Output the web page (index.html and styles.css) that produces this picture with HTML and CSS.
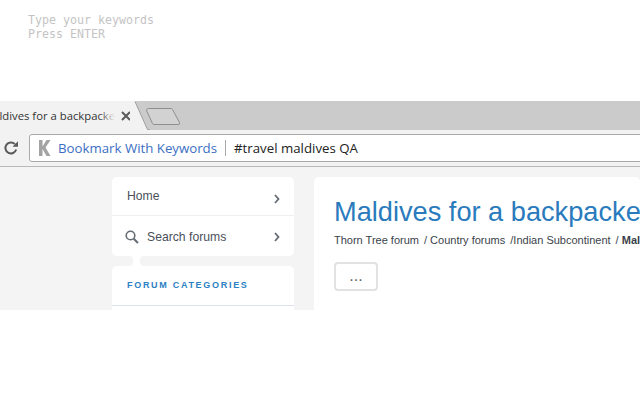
FILE: index.html
```html
<!DOCTYPE html>
<html lang="en">
  <head>
    <meta charset="UTF-8" />
    <title>Bookmark With Keywords</title>
    <link rel="stylesheet" href="styles.css">
  </head>
  <body>
    <div class="hint">
      <div>Type your keywords</div>
      <div>Press ENTER</div>
    </div>

    <div class="browser">
      <div class="tabstrip">
        <div class="tab">
          <span class="tab-title">Maldives for a backpacker</span>
          <svg class="tab-close" width="10" height="10" viewBox="0 0 10 10">
            <path d="M1 1L9 9M9 1L1 9" stroke="#5a5a5a" stroke-width="2" fill="none" />
          </svg>
        </div>
        <svg class="tab-edge" width="20" height="29" viewBox="0 0 20 29">
          <path d="M0 0H5L18 29H0Z" fill="#f2f2f2" />
          <path d="M5 0.500L17.500 28.500" stroke="#9a9a9a" fill="none" />
          <path d="M17 28.500H20" stroke="#a8a8a8" fill="none" />
        </svg>
        <svg class="new-tab" width="36" height="18" viewBox="0 0 36 18">
          <path d="M1.500 2.500Q1.500 0.500 3.500 0.500H26Q27 0.500 27.500 1.500L34.500 14.500Q35.500 16.500 33 16.500H9Q8 16.500 7.500 15.500Z" fill="#d2d2d2" stroke="#8f8f8f" />
        </svg>
      </div>

      <div class="toolbar">
        <svg class="reload" width="16" height="16" viewBox="0 0 16 16">
          <path d="M13.200 9.500A5.500 5.500 0 1 1 11.900 4.100" stroke="#5a5a5a" stroke-width="2" fill="none" />
          <path d="M9.500 6.800H15V1.300Z" fill="#5a5a5a" />
        </svg>
        <div class="omnibox">
          <svg class="ext-icon" width="13" height="16" viewBox="0 0 13 16">
            <path d="M1 0H4.500V6.500L8.500 0H12.500L7.500 7.500L12.500 16H8.500L4.500 9V16H1Z" fill="#a3a3a3" />
          </svg>
          <span class="ext-name">Bookmark With Keywords</span>
          <span class="omni-sep"></span>
          <span class="omni-text">#travel maldives QA</span>
        </div>
      </div>

      <div class="page">
        <div class="side">
          <div class="card nav-card">
            <div class="nav-row home-row">
              <span class="nav-label">Home</span>
              <svg class="chev" width="6" height="10" viewBox="0 0 6 10">
                <path d="M1 1L4.500 5L1 9" stroke="#666c73" stroke-width="1.800" fill="none" />
              </svg>
            </div>
            <div class="nav-row search-row">
              <span class="nav-label search-label">
                <svg width="14" height="14" viewBox="0 0 14 14">
                  <circle cx="5.500" cy="5.500" r="4.300" stroke="#666c73" stroke-width="1.600" fill="none" />
                  <path d="M8.700 8.700L13 13" stroke="#666c73" stroke-width="2" fill="none" />
                </svg>
                Search forums
              </span>
              <svg class="chev" width="6" height="10" viewBox="0 0 6 10">
                <path d="M1 1L4.500 5L1 9" stroke="#666c73" stroke-width="1.800" fill="none" />
              </svg>
            </div>
          </div>
          <div class="joint">
            <div class="joint-left"></div>
            <div class="joint-right"></div>
          </div>
          <div class="card cat-card">
            <div class="cat-title">FORUM CATEGORIES</div>
          </div>
        </div>

        <div class="card main">
          <h1>Maldives for a backpacker</h1>
          <div class="crumbs">
            <span>Thorn Tree forum</span>
            <span>/ Country forums</span>
            <span>/Indian Subcontinent</span>
            <span>/ <b>Maldives</b></span>
          </div>
          <div class="more">...</div>
        </div>
      </div>
    </div>
  </body>
</html>
```

FILE: styles.css
```css
html,
body {
  margin: 0;
  padding: 0;
  height: 400px;
  overflow: hidden;
  background-color: #fff;
}

body {
  font-family: "Open Sans", sans-serif;
}

.hint {
  height: 101px;
  box-sizing: border-box;
  padding: 13px 0 0 28px;
  font-family: "DejaVu Sans Mono", monospace;
  font-size: 11.630px;
  line-height: 14px;
  color: #c4c4c4;
}

.browser {
  height: 209px;
  width: 640px;
  overflow: hidden;
  display: flex;
  flex-direction: column;
}

/* Tab strip */
.tabstrip {
  height: 29px;
  flex-shrink: 0;
  background-color: #cbcbcb;
  display: flex;
  align-items: flex-start;
}

.tab {
  width: 130px;
  height: 29px;
  flex-shrink: 0;
  background-color: #f2f2f2;
  display: flex;
  align-items: center;
}

.tab-title {
  width: 115px;
  flex-shrink: 0;
  position: relative;
  white-space: nowrap;
  overflow: hidden;
  font-size: 11.300px;
  text-indent: -17px;
  color: #333;
}

/* fade at the end of a long title */
.tab-title::after {
  content: "";
  position: absolute;
  top: 0;
  right: 0;
  bottom: 0;
  width: 16px;
  background: linear-gradient(to right, rgba(242, 242, 242, 0), #f2f2f2);
}

.tab-close {
  margin-left: 6px;
  flex-shrink: 0;
}

.tab-edge {
  flex-shrink: 0;
}

.new-tab {
  margin: 7px 0 0 -5px;
}

/* Toolbar */
.toolbar {
  height: 37px;
  flex-shrink: 0;
  box-sizing: border-box;
  background-color: #f2f2f2;
  border-bottom: 1px solid #b8b8b8;
  display: flex;
  align-items: center;
  padding: 0 0 0 3px;
}

.reload {
  flex-shrink: 0;
  margin-right: 10px;
}

.omnibox {
  height: 28px;
  width: 640px;
  flex-shrink: 0;
  box-sizing: border-box;
  background-color: #fff;
  border: 1px solid #a9a9a9;
  border-radius: 3px;
  display: flex;
  align-items: center;
  padding-left: 8px;
  font-size: 13.250px;
  white-space: nowrap;
}

.ext-icon {
  margin-right: 7px;
}

.ext-name {
  color: #3b6fc4;
}

.omni-sep {
  width: 1px;
  height: 16px;
  background-color: #a9a9a9;
  margin: 0 8px;
}

.omni-text {
  color: #222;
}

/* Page */
.page {
  flex-grow: 1;
  background-color: #f4f4f4;
  display: flex;
  align-items: flex-start;
  padding: 10px 0 0 112px;
  gap: 20px;
}

.card {
  background-color: #fff;
  border-radius: 5px;
}

.side {
  width: 182px;
  flex-shrink: 0;
}

.nav-row {
  box-sizing: border-box;
  padding: 0 14px 0 15px;
  display: flex;
  align-items: center;
  justify-content: space-between;
  font-family: "Liberation Sans", sans-serif;
  font-size: 12.200px;
  color: #4a4f5a;
}

.home-row {
  height: 38px;
}

.home-row .chev {
  margin-top: 5px;
}

.search-row {
  height: 41px;
  padding-top: 2px;
  border-top: 1px solid #eef0f2;
}

.search-label {
  display: flex;
  align-items: center;
  gap: 8px;
  margin-left: -2px;
}

/* strip that ties the two side cards together */
.joint {
  height: 10px;
  background-color: #fff;
  display: flex;
  gap: 7px;
}

.joint-left {
  width: 21px;
  background-color: #f4f4f4;
  border-radius: 0 4px 4px 0;
}

.joint-right {
  flex-grow: 1;
  background-color: #f4f4f4;
  border-radius: 4px 0 0 4px;
}

.cat-card {
  height: 60px;
}

.cat-title {
  height: 39px;
  line-height: 39px;
  padding-left: 15px;
  border-bottom: 1px solid #dde3e8;
  font-family: "Liberation Sans", sans-serif;
  font-size: 9px;
  font-weight: bold;
  letter-spacing: 1.700px;
  color: #2b7fc3;
}

.main {
  flex-grow: 1;
  height: 200px;
  min-width: 0;
  padding: 19px 0 0 20px;
  overflow: hidden;
  white-space: nowrap;
}

.main h1 {
  margin: 0;
  font-family: "Liberation Sans", sans-serif;
  font-size: 27.200px;
  line-height: 32px;
  font-weight: normal;
  color: #2a7bbd;
}

.crumbs {
  margin-top: 5px;
  display: flex;
  gap: 5px;
  font-family: "Liberation Sans", sans-serif;
  font-size: 11px;
  line-height: 14px;
  color: #3a3f4a;
}

.more {
  margin-top: 15px;
  width: 44px;
  height: 29px;
  box-sizing: border-box;
  border: 2px solid #e2e2e2;
  border-radius: 4px;
  text-align: center;
  font-family: "Liberation Sans", sans-serif;
  font-size: 16px;
  line-height: 24px;
  color: #666;
}
```
